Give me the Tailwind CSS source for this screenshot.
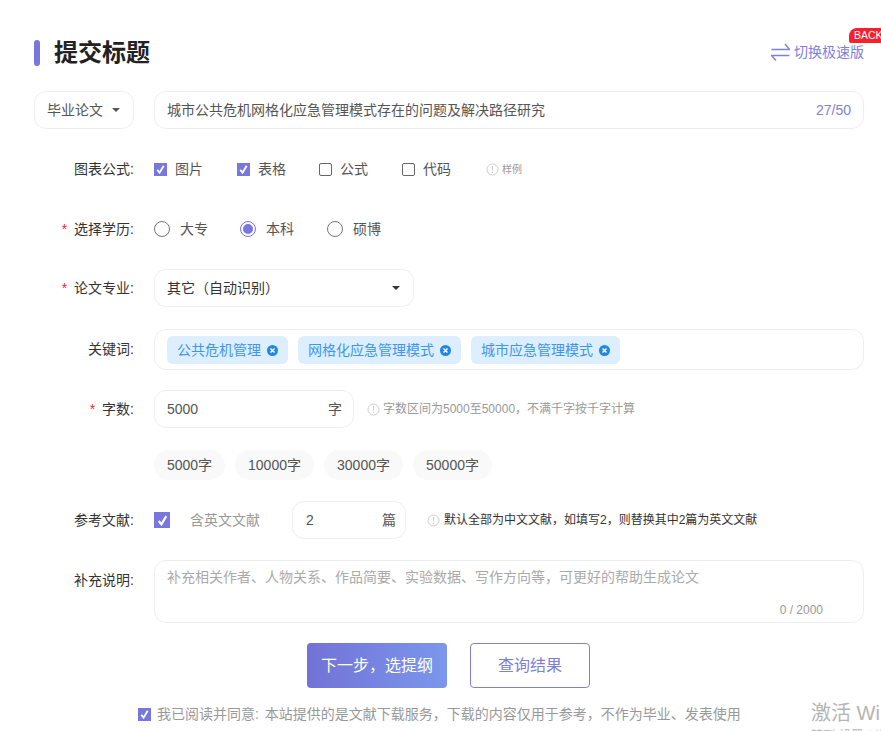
<!DOCTYPE html>
<html lang="zh-CN">
<head>
<meta charset="utf-8">
<title>提交标题</title>
<script src="https://cdn.jsdelivr.net/npm/@tailwindcss/browser@4"></script>
</head>
<body class="bg-white">
<div class="relative h-[731px] w-[881px] overflow-hidden bg-white pl-[34px] pr-[17px] pt-[40px] font-['Liberation_Sans','Noto_Sans_CJK_SC',sans-serif] text-[14px] text-[#333]">

  <div class="absolute right-0 top-[28px] flex h-[15px] w-[32px] items-center overflow-hidden rounded-tl-[8px] rounded-bl-[2px] bg-[#f5222d] pl-[5px] text-[10.5px] leading-none text-white">BACK</div>

  <!-- header -->
  <div class="flex h-[26px] items-center justify-between">
    <div class="flex items-center">
      <div class="h-[26px] w-[6px] rounded-[3px] bg-[#7777dd]"></div>
      <h1 class="ml-[14px] text-[24px] font-bold leading-[26px] text-[#222]">提交标题</h1>
    </div>
    <div class="mb-[2px] flex items-center gap-[4px] text-[14px] text-[#7f7fe0]">
      <svg class="h-[18px] w-[19px]" viewBox="0 0 19 18" fill="none" stroke="#7f7fe8" stroke-width="1.4"><path d="M0.5 6.5H18.5L14 1"/><path d="M18.5 12.5H0.5L5 17.5"/></svg>
      <span>切换极速版</span>
    </div>
  </div>

  <!-- title row -->
  <div class="mt-[25px] flex h-[38px] gap-[20px]">
    <div class="flex w-[100px] items-center justify-between rounded-[12px] border border-[#eeeeee] pl-[12px] pr-[13px] text-[#555]">
      <span>毕业论文</span>
      <span class="h-0 w-0 border-x-[4px] border-t-[4px] border-x-transparent border-t-[#555]"></span>
    </div>
    <div class="flex flex-1 items-center justify-between rounded-[12px] border border-[#eeeeee] pl-[12px] pr-[12px]">
      <span class="pt-[1px] text-[#555]">城市公共危机网格化应急管理模式存在的问题及解决路径研究</span>
      <span class="text-[14px] text-[#7f7fe0]">27/50</span>
    </div>
  </div>

  <!-- chart options -->
  <div class="mt-[30px] flex h-[20px] items-center gap-[20px]">
    <div class="w-[100px] text-right">图表公式:</div>
    <div class="flex items-center text-[#555]">
      <span class="flex h-[13px] w-[13px] items-center justify-center bg-[#7777dd]"><svg class="h-[11px] w-[11px]" viewBox="0 0 12 12" fill="none" stroke="#fff" stroke-width="2"><path d="M2.5 6.5 5 9.5 9.5 2"/></svg></span>
      <span class="ml-[8px] w-[62px]">图片</span>
      <span class="flex h-[13px] w-[13px] items-center justify-center bg-[#7777dd]"><svg class="h-[11px] w-[11px]" viewBox="0 0 12 12" fill="none" stroke="#fff" stroke-width="2"><path d="M2.5 6.5 5 9.5 9.5 2"/></svg></span>
      <span class="ml-[8px] w-[61px]">表格</span>
      <span class="h-[13px] w-[13px] rounded-[2px] border border-[#666]"></span>
      <span class="ml-[8px] w-[62px]">公式</span>
      <span class="h-[13px] w-[13px] rounded-[2px] border border-[#666]"></span>
      <span class="ml-[8px] w-[63px]">代码</span>
      <span class="flex items-center gap-[3px] text-[10px] text-[#999]"><svg class="h-[13px] w-[13px]" viewBox="0 0 13 13" fill="none" stroke="#ccc"><circle cx="6.5" cy="6.5" r="5.5"/><path d="M6.5 3v4.5M6.5 8.7v1.3"/></svg>样例</span>
    </div>
  </div>

  <!-- education -->
  <div class="mt-[40px] flex h-[20px] items-center gap-[20px]">
    <div class="w-[100px] text-right"><span class="mr-[7px] text-[#f5222d]">*</span>选择学历:</div>
    <div class="flex items-center text-[#555]">
      <span class="h-[16px] w-[16px] rounded-full border border-[#777]"></span>
      <span class="ml-[10px] w-[60px]">大专</span>
      <span class="flex h-[16px] w-[16px] items-center justify-center rounded-full border border-[#7777dd]"><span class="h-[10px] w-[10px] rounded-full bg-[#7777dd]"></span></span>
      <span class="ml-[10px] w-[61px]">本科</span>
      <span class="h-[16px] w-[16px] rounded-full border border-[#777]"></span>
      <span class="ml-[10px]">硕博</span>
    </div>
  </div>

  <!-- major -->
  <div class="mt-[30px] flex h-[38px] items-center gap-[20px]">
    <div class="w-[100px] text-right"><span class="mr-[7px] text-[#f5222d]">*</span>论文专业:</div>
    <div class="flex h-full w-[260px] items-center justify-between rounded-[12px] border border-[#eeeeee] pl-[12px] pr-[13px]">
      <span>其它（自动识别）</span>
      <span class="h-0 w-0 border-x-[4px] border-t-[4px] border-x-transparent border-t-[#333]"></span>
    </div>
  </div>

  <!-- keywords -->
  <div class="mt-[22px] flex h-[41px] items-center gap-[20px]">
    <div class="w-[100px] text-right">关键词:</div>
    <div class="flex h-full flex-1 items-center gap-[10px] rounded-[12px] border border-[#eeeeee] pl-[12px] pt-[1px]">
      <span class="flex h-[28px] items-center gap-[6px] rounded-[6px] bg-[#ddeeff] pl-[10px] pr-[10px] text-[#4096ee]">公共危机管理<svg class="h-[11px] w-[11px]" viewBox="0 0 11 11"><circle cx="5.5" cy="5.5" r="5.5" fill="#1e88e5"/><path d="M3.5 3.5 7.5 7.5M7.5 3.5 3.5 7.5" stroke="#fff" stroke-width="1.5"/></svg></span>
      <span class="flex h-[28px] items-center gap-[6px] rounded-[6px] bg-[#ddeeff] pl-[10px] pr-[10px] text-[#4096ee]">网格化应急管理模式<svg class="h-[11px] w-[11px]" viewBox="0 0 11 11"><circle cx="5.5" cy="5.5" r="5.5" fill="#1e88e5"/><path d="M3.5 3.5 7.5 7.5M7.5 3.5 3.5 7.5" stroke="#fff" stroke-width="1.5"/></svg></span>
      <span class="flex h-[28px] items-center gap-[6px] rounded-[6px] bg-[#ddeeff] pl-[10px] pr-[10px] text-[#4096ee]">城市应急管理模式<svg class="h-[11px] w-[11px]" viewBox="0 0 11 11"><circle cx="5.5" cy="5.5" r="5.5" fill="#1e88e5"/><path d="M3.5 3.5 7.5 7.5M7.5 3.5 3.5 7.5" stroke="#fff" stroke-width="1.5"/></svg></span>
    </div>
  </div>

  <!-- word count -->
  <div class="mt-[20px] flex h-[38px] items-center gap-[20px]">
    <div class="w-[100px] text-right"><span class="mr-[7px] text-[#f5222d]">*</span>字数:</div>
    <div class="flex h-full w-[200px] items-center justify-between rounded-[12px] border border-[#eeeeee] pl-[12px] pr-[11px] text-[#555]">
      <span class="text-[14px]">5000</span><span>字</span>
    </div>
    <span class="-ml-[7px] flex items-center gap-[3px] text-[12px] text-[#999]"><svg class="h-[13px] w-[13px]" viewBox="0 0 13 13" fill="none" stroke="#ccc"><circle cx="6.5" cy="6.5" r="5.5"/><path d="M6.5 3v4.5M6.5 8.7v1.3"/></svg>字数区间为5000至50000，不满千字按千字计算</span>
  </div>

  <!-- word chips -->
  <div class="ml-[120px] mt-[22px] flex h-[30px] gap-[10px] text-[#555]">
    <span class="flex w-[71px] items-center justify-center rounded-full bg-[#f9f9f9]">5000字</span>
    <span class="flex w-[79px] items-center justify-center rounded-full bg-[#f9f9f9]">10000字</span>
    <span class="flex w-[79px] items-center justify-center rounded-full bg-[#f9f9f9]">30000字</span>
    <span class="flex w-[79px] items-center justify-center rounded-full bg-[#f9f9f9]">50000字</span>
  </div>

  <!-- references -->
  <div class="mt-[21px] flex h-[38px] items-center gap-[20px]">
    <div class="w-[100px] text-right">参考文献:</div>
    <div class="flex h-full items-center">
      <span class="flex h-[16px] w-[16px] items-center justify-center bg-[#7777dd]"><svg class="h-[13px] w-[13px]" viewBox="0 0 12 12" fill="none" stroke="#fff" stroke-width="2"><path d="M2.5 6.5 5 9.5 9.5 2"/></svg></span>
      <span class="ml-[20px] w-[102px] text-[#999]">含英文文献</span>
      <div class="flex h-full w-[114px] items-center justify-between rounded-[12px] border border-[#eeeeee] pl-[13px] pr-[9px] text-[#555]">
        <span class="text-[14px]">2</span><span>篇</span>
      </div>
      <span class="ml-[21px] flex items-center gap-[4px] text-[12px] text-[#333]"><svg class="h-[13px] w-[13px]" viewBox="0 0 13 13" fill="none" stroke="#ccc"><circle cx="6.5" cy="6.5" r="5.5"/><path d="M6.5 3v4.5M6.5 8.7v1.3"/></svg>默认全部为中文文献，如填写2，则替换其中2篇为英文文献</span>
    </div>
  </div>

  <!-- notes -->
  <div class="mt-[21px] flex h-[63px] gap-[20px]">
    <div class="w-[100px] pt-[10px] text-right">补充说明:</div>
    <div class="relative flex-1 rounded-[12px] border border-[#eeeeee] pl-[12px] pt-[6px] text-[#aaa]">
      补充相关作者、人物关系、作品简要、实验数据、写作方向等，可更好的帮助生成论文
      <span class="absolute bottom-[3px] right-[40px] text-[12px] text-[#999]">0 / 2000</span>
    </div>
  </div>

  <!-- buttons -->
  <div class="mt-[20px] flex h-[45px] gap-[23px] pl-[273px]">
    <div class="flex w-[140px] items-center justify-center rounded-[4px] bg-gradient-to-r from-[#7272d6] to-[#7b97ec] text-[16px] text-white">下一步，选提纲</div>
    <div class="flex w-[120px] items-center justify-center rounded-[4px] border border-[#7f7fd8] text-[16px] text-[#7f7fd8]">查询结果</div>
  </div>

  <!-- agreement -->
  <div class="mt-[17px] flex h-[18px] items-center pl-[104px] text-[#999]">
    <span class="flex h-[13px] w-[13px] items-center justify-center bg-[#7777dd]"><svg class="h-[11px] w-[11px]" viewBox="0 0 12 12" fill="none" stroke="#fff" stroke-width="2"><path d="M2.5 6.5 5 9.5 9.5 2"/></svg></span>
    <span class="ml-[6px] [word-spacing:2px]">我已阅读并同意: 本站提供的是文献下载服务，下载的内容仅用于参考，不作为毕业、发表使用</span>
  </div>

  <!-- system watermark -->
  <div class="absolute left-[811px] top-[700px] whitespace-nowrap text-[20px] leading-[26px] text-[#b4b4b4]">激活 Windows</div>
  <div class="absolute left-[811px] top-[728px] whitespace-nowrap text-[12px] leading-[16px] text-[#b4b4b4]">转到"设置"以激活 Windows。</div>
</div>
</body>
</html>
